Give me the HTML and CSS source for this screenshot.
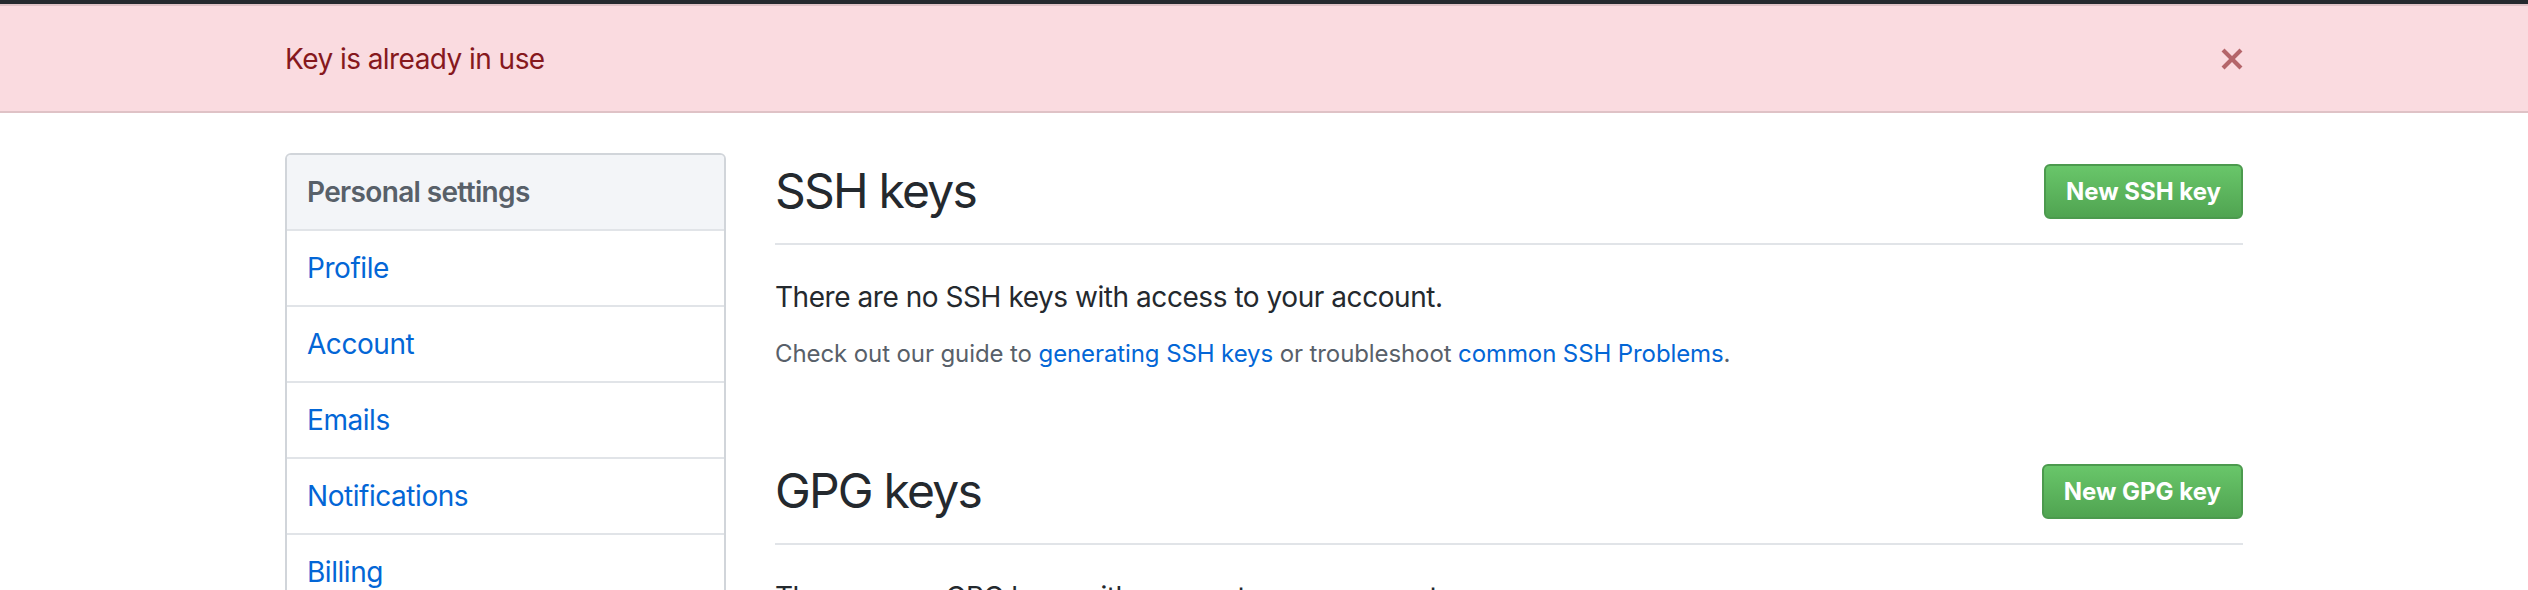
FILE: index.html
```html
<!DOCTYPE html>
<html lang="en">
<head>
<meta charset="utf-8">
<title>SSH and GPG keys</title>
<link rel="stylesheet" href="styles.css">
</head>
<body>
<div class="topbar"></div>
<div class="flash">
  <div class="container flash-inner">
    <span class="flash-msg">Key is already in use</span>
    <button class="flash-close" type="button" aria-label="Dismiss this message">
      <svg width="24" height="32" viewBox="0 0 12 16"><path fill="currentColor" d="M7.48 8l3.75 3.75-1.48 1.48L6 9.480l-3.75 3.75-1.48-1.48L4.52 8 .77 4.25l1.48-1.48L6 6.52l3.75-3.75 1.48 1.48L7.48 8z"/></svg>
    </button>
  </div>
</div>
<div class="container page">
  <nav class="menu">
    <h3 class="menu-heading">Personal settings</h3>
    <a class="menu-item" href="#">Profile</a>
    <a class="menu-item" href="#">Account</a>
    <a class="menu-item" href="#">Emails</a>
    <a class="menu-item" href="#">Notifications</a>
    <a class="menu-item" href="#">Billing</a>
    <a class="menu-item" href="#">SSH and GPG keys</a>
    <a class="menu-item" href="#">Security</a>
  </nav>
  <main class="main">
    <section class="section">
      <div class="subhead">
        <h2 class="subhead-heading">SSH keys</h2>
        <a class="btn" href="#">New SSH key</a>
      </div>
      <p class="blank">There are no SSH keys with access to your account.</p>
      <p class="note">Check out our guide to <a href="#">generating SSH keys</a> or troubleshoot <a href="#">common SSH Problems</a>.</p>
    </section>
    <section class="section">
      <div class="subhead">
        <h2 class="subhead-heading">GPG keys</h2>
        <a class="btn" href="#">New GPG key</a>
      </div>
      <p class="blank">There are no GPG keys with access to your account.</p>
      <p class="note">Learn how to <a href="#">generate a GPG key and add it to your account</a>.</p>
    </section>
  </main>
</div>
</body>
</html>
```
FILE: styles.css
```css
* { box-sizing: border-box; }
body {
  margin: 0;
  font-family: Inter, "Noto Sans", sans-serif;
  color: #24292e;
  background: #fff;
  letter-spacing: -0.45px;
}
a { color: #0366d6; text-decoration: none; }

.container { width: 1958px; margin: 0 auto; }

.topbar { height: 4px; background: #24292e; }

.flash {
  background: #fadbe0;
  border-top: 2px solid #dfc2c6;
  border-bottom: 2px solid #dfc2c6;
  padding: 32px 0 31px;
}
.flash-inner {
  display: flex;
  align-items: center;
  justify-content: space-between;
  height: 42px;
}
.flash-msg {
  font-size: 28px;
  line-height: 42px;
  color: #86181d;
  letter-spacing: -0.55px;
}
.flash-close {
  display: flex;
  padding: 0;
  margin-right: -1px;
  border: 0;
  background: none;
  color: #86181d;
  opacity: 0.6;
}

.page {
  display: flex;
  gap: 49px;
  margin-top: 40px;
  align-items: flex-start;
}

.menu {
  width: 441px;
  flex: none;
  border: 2px solid #d1d5da;
  border-radius: 6px;
  overflow: hidden;
}
.menu-heading {
  margin: 0;
  padding: 16px 20px;
  font-size: 28px;
  line-height: 42px;
  font-weight: 600;
  color: #586069;
  background: #f3f5f8;
  border-bottom: 2px solid #e1e4e8;
  letter-spacing: -0.65px;
}
.menu-item {
  display: block;
  padding: 16px 20px;
  font-size: 28px;
  line-height: 42px;
  border-bottom: 2px solid #e1e4e8;
}

.main { flex: 1; min-width: 0; }

.section { padding-top: 2px; }
.section + .section { margin-top: 80px; }

.subhead {
  display: flex;
  align-items: center;
  justify-content: space-between;
  padding-bottom: 16px;
  margin-bottom: 31px;
  border-bottom: 2px solid #e1e4e8;
}
.subhead-heading {
  margin: 0;
  font-size: 48px;
  line-height: 72px;
  font-weight: 400;
  color: #24292e;
  letter-spacing: -1.8px;
}

.btn {
  display: inline-block;
  padding: 6px 20px;
  font-size: 24px;
  line-height: 39px;
  font-weight: 700;
  color: #fff;
  background: linear-gradient(#69c66a, #50a451);
  border: 2px solid #4c9a4e;
  border-radius: 6px;
  letter-spacing: 0;
}

.blank {
  margin: 0 0 16px;
  font-size: 28px;
  line-height: 42px;
  color: #24292e;
}
.note {
  margin: 0;
  font-size: 24px;
  line-height: 39px;
  color: #586069;
  letter-spacing: -0.1px;
}
```
